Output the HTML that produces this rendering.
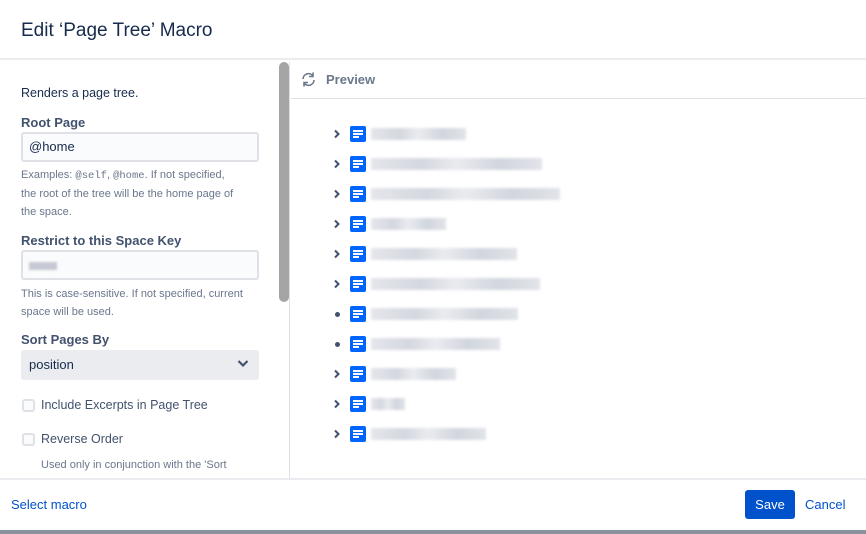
<!DOCTYPE html>
<html><head><meta charset="utf-8"><style>
*{box-sizing:border-box;margin:0;padding:0}
body{width:866px;height:534px;overflow:hidden;background:#fff;font-family:"Liberation Sans",sans-serif;color:#172b4d;position:relative}
.abs{position:absolute}
.hdr{left:0;top:0;width:866px;height:60px;border-bottom:2px solid #ebecf0}
.hdr h1{position:absolute;left:21px;top:20px;font-size:19px;font-weight:normal;color:#172b4d}
.lbl{font-size:13px;font-weight:bold;color:#42526e;left:21px}
.t{font-size:12.5px;color:#172b4d}
.help{font-size:11px;color:#6b778c;line-height:18px;left:21px;width:260px;white-space:nowrap}
.inp{left:21px;width:238px;height:30px;background:#fafbfc;border:2px solid #dfe1e6;border-radius:3px;font-size:13px;padding:5px 0 0 6px;color:#172b4d}
.sel{left:21px;width:238px;height:30px;background:#ebecf0;border-radius:3px;font-size:13px;padding:7px 0 0 8px;color:#172b4d}
.cb{width:13px;height:13px;border:2px solid #dfe1e6;border-radius:3px;background:#fafbfc;left:22px}
mono{font-family:"Liberation Mono",monospace;font-size:10.5px}
.row{left:333px;height:16px}
.chev{position:absolute;left:0;top:3px}
.dot{position:absolute;left:2px;top:6px;width:5px;height:5px;border-radius:50%;background:#42526e}
.ic{position:absolute;left:17px;top:0;width:16px;height:16px;background:#0065ff;border-radius:2px}
.ic i{position:absolute;left:3px;height:2px;background:#fff}
.bl{position:absolute;left:38px;top:2px;height:12px;background:linear-gradient(90deg,#e0e2e8,#cdd1da 30%,#e6e8ed 50%,#cacfd8 75%,#dcdfe5);filter:blur(1.2px);opacity:.85}
</style></head><body>
<div class="abs hdr"><h1>Edit ‘Page Tree’ Macro</h1></div>
<div class="abs" style="left:0;top:62px;width:290px;height:416px;border-right:1px solid #dfe1e6"></div>
<div class="abs" style="left:279px;top:62px;width:10px;height:240px;background:#a5a5a5;border-radius:5px"></div>
<div class="abs t" style="left:21px;top:86px">Renders a page tree.</div>
<div class="abs lbl" style="top:115px">Root Page</div>
<div class="abs inp" style="top:132px">@home</div>
<div class="abs help" style="top:166px">Examples: <mono>@self</mono>, <mono>@home</mono>. If not specified,<br>the root of the tree will be the home page of<br>the space.</div>
<div class="abs lbl" style="top:233px">Restrict to this Space Key</div>
<div class="abs inp" style="top:250px"><span style="display:inline-block;width:28px;height:8px;margin-top:5px;background:#c5c9d3;filter:blur(1px)"></span></div>
<div class="abs help" style="top:285px">This is case-sensitive. If not specified, current<br>space will be used.</div>
<div class="abs lbl" style="top:332px">Sort Pages By</div>
<div class="abs sel" style="top:350px">position
<svg class="abs" style="left:216px;top:9px" width="12" height="9" viewBox="0 0 12 9"><path d="M1.5 2 L6 6.5 L10.5 2" stroke="#42526e" stroke-width="2.2" fill="none"/></svg></div>
<div class="abs cb" style="top:399px"></div>
<div class="abs t" style="left:41px;top:398px;color:#42526e">Include Excerpts in Page Tree</div>
<div class="abs cb" style="top:433px"></div>
<div class="abs t" style="left:41px;top:432px;color:#42526e">Reverse Order</div>
<div class="abs help" style="left:41px;top:456px;width:230px;height:22px;overflow:hidden">Used only in conjunction with the 'Sort<br>Pages By' parameter.</div>

<div class="abs" style="left:291px;top:62px;width:575px;height:37px;border-bottom:1px solid #dfe1e6"></div>
<svg class="abs" style="left:300px;top:71px" width="17" height="17" viewBox="0 0 17 17"><path d="M3 8 A5.5 5.5 0 0 1 13 5 M14 9 A5.5 5.5 0 0 1 4 12" stroke="#6b778c" stroke-width="1.6" fill="none"/><path d="M13 1.5 V5.5 H9" stroke="#6b778c" stroke-width="1.6" fill="none"/><path d="M4 15.5 V11.5 H8" stroke="#6b778c" stroke-width="1.6" fill="none"/></svg>
<div class="abs" style="left:326px;top:72px;font-size:13px;font-weight:bold;color:#6b778c">Preview</div>

<div id="tree"></div>
<script>
var ends=[466,542,560,446,517,540,518,500,456,405,486],h='';
for(var i=0;i<11;i++){var y=126+i*30;
h+='<div class="abs row" style="top:'+y+'px">'+(i==6||i==7?'<span class="dot"></span>':'<svg class="chev" width="8" height="10" viewBox="0 0 8 10"><path d="M2 1.5 L5.5 5 L2 8.5" stroke="#42526e" stroke-width="2" fill="none"/></svg>')+'<span class="ic"><i style="top:4px;width:10px"></i><i style="top:7px;width:10px"></i><i style="top:10px;width:6px"></i></span><span class="bl" style="width:'+(ends[i]-371)+'px"></span></div>';}
document.getElementById('tree').innerHTML=h;
</script>

<div class="abs" style="left:0;top:478px;width:866px;height:52px;border-top:2px solid #ebecf0;background:#fff"></div>
<div class="abs" style="left:11px;top:497px;font-size:13px;color:#0052cc">Select macro</div>
<div class="abs" style="left:745px;top:490px;width:50px;height:29px;background:#0052cc;border-radius:3px;color:#fff;font-size:13px;text-align:center;line-height:29px">Save</div>
<div class="abs" style="left:805px;top:497px;font-size:13px;color:#0052cc">Cancel</div>
<div class="abs" style="left:0;top:530px;width:866px;height:4px;background:#8a929f"></div>
</body></html>
